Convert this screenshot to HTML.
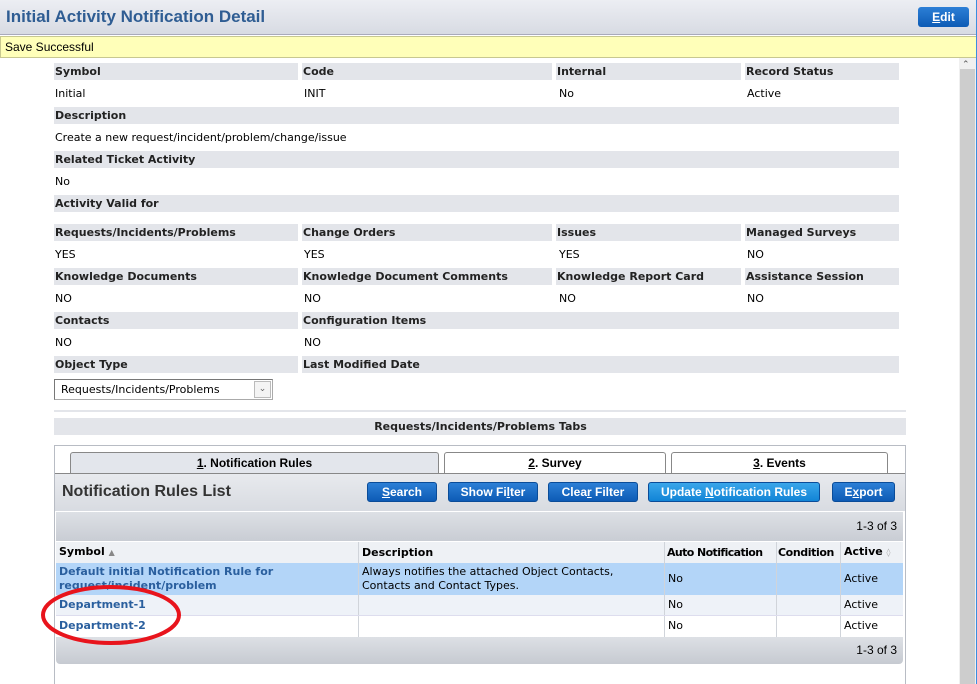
<!DOCTYPE html>
<html><head><style>
*{margin:0;padding:0;box-sizing:border-box}
body{width:977px;height:684px;overflow:hidden;background:#fff;font-family:"DejaVu Sans","Liberation Sans",sans-serif;font-size:11px;color:#000;position:relative}
.a{position:absolute}
.lb{position:absolute;background:#e3e5ea;font-weight:bold;height:17px;line-height:17px;padding-left:1px;font-size:11px;color:#222}
.v{position:absolute;line-height:14px;font-size:11px}
.btn{position:absolute;top:482px;height:20px;background:linear-gradient(#2c7fd6,#0d5bb5);border:1px solid #0a4c99;border-radius:3px;color:#fff;font-family:"Liberation Sans",sans-serif;font-weight:bold;font-size:12px;text-align:center;line-height:18px}
.tab{position:absolute;top:452px;height:22px;border:1px solid #888;border-bottom:none;border-radius:3px 3px 0 0;background:#fff;text-align:center;line-height:21px;font-family:"Liberation Sans",sans-serif;font-weight:bold;font-size:12px}
.c{position:absolute;border-right:1px solid #d0d4da;height:100%;top:0;white-space:nowrap}
.lnk{color:#2a5f9e;font-weight:bold}
</style></head><body>
<div class="a" style="left:0;top:0;width:977px;height:35px;background:linear-gradient(#eceef3,#d8dbe3);border-bottom:1px solid #aab"></div>
<div class="a" style="left:6px;top:7px;font-family:'Liberation Sans',sans-serif;font-weight:bold;font-size:17px;color:#2f5d93">Initial Activity Notification Detail</div>
<div class="a" style="left:918px;top:7px;width:51px;height:20px;background:linear-gradient(#2c7fd6,#0d5bb5);border-radius:3px;color:#fff;font-family:'Liberation Sans',sans-serif;font-weight:bold;font-size:12px;text-align:center;line-height:20px"><u>E</u>dit</div>
<div class="a" style="left:0;top:36px;width:977px;height:22px;background:#ffffb9;border:1px solid #c8c890;font-family:'Liberation Sans',sans-serif;font-size:12px;line-height:20px;padding-left:4px">Save Successful</div>
<div class="a" style="left:959px;top:58px;width:18px;height:626px;background:#f0f0f0"></div>
<div class="a" style="left:962px;top:60px;font-size:9px;color:#555">&#8963;</div>
<div class="a" style="left:960px;top:69px;width:15px;height:615px;background:#cdcdcd"></div>
<div class="a" style="left:976px;top:0;width:1px;height:684px;background:#3b8ee0"></div>

<div class="lb" style="left:54px;top:63px;width:244px">Symbol</div>
<div class="lb" style="left:302px;top:63px;width:250px">Code</div>
<div class="lb" style="left:556px;top:63px;width:185px">Internal</div>
<div class="lb" style="left:745px;top:63px;width:154px">Record Status</div>
<div class="v" style="left:55px;top:87px">Initial</div>
<div class="v" style="left:304px;top:87px">INIT</div>
<div class="v" style="left:559px;top:87px">No</div>
<div class="v" style="left:747px;top:87px">Active</div>
<div class="lb" style="left:54px;top:107px;width:845px">Description</div>
<div class="v" style="left:55px;top:131px">Create a new request/incident/problem/change/issue</div>
<div class="lb" style="left:54px;top:151px;width:845px">Related Ticket Activity</div>
<div class="v" style="left:55px;top:175px">No</div>
<div class="lb" style="left:54px;top:195px;width:845px">Activity Valid for</div>

<div class="lb" style="left:54px;top:224px;width:244px">Requests/Incidents/Problems</div>
<div class="lb" style="left:302px;top:224px;width:250px">Change Orders</div>
<div class="lb" style="left:556px;top:224px;width:185px">Issues</div>
<div class="lb" style="left:745px;top:224px;width:154px">Managed Surveys</div>
<div class="v" style="left:55px;top:248px">YES</div>
<div class="v" style="left:304px;top:248px">YES</div>
<div class="v" style="left:559px;top:248px">YES</div>
<div class="v" style="left:747px;top:248px">NO</div>
<div class="lb" style="left:54px;top:268px;width:244px">Knowledge Documents</div>
<div class="lb" style="left:302px;top:268px;width:250px">Knowledge Document Comments</div>
<div class="lb" style="left:556px;top:268px;width:185px">Knowledge Report Card</div>
<div class="lb" style="left:745px;top:268px;width:154px">Assistance Session</div>
<div class="v" style="left:55px;top:292px">NO</div>
<div class="v" style="left:304px;top:292px">NO</div>
<div class="v" style="left:559px;top:292px">NO</div>
<div class="v" style="left:747px;top:292px">NO</div>
<div class="lb" style="left:54px;top:312px;width:244px">Contacts</div>
<div class="lb" style="left:302px;top:312px;width:597px">Configuration Items</div>
<div class="v" style="left:55px;top:336px">NO</div>
<div class="v" style="left:304px;top:336px">NO</div>
<div class="lb" style="left:54px;top:356px;width:244px">Object Type</div>
<div class="lb" style="left:302px;top:356px;width:597px">Last Modified Date</div>
<div class="a" style="left:54px;top:379px;width:219px;height:21px;border:1px solid #aaa;border-top-color:#777;border-left-color:#777;padding-left:6px;line-height:19px;font-size:11px">Requests/Incidents/Problems</div>
<div class="a" style="left:254px;top:381px;width:17px;height:17px;border:1px solid #bbb;background:#f4f4f4;font-size:9px;text-align:center;line-height:15px;color:#666">&#8964;</div>

<div class="a" style="left:54px;top:410px;width:852px;height:2px;background:#e3e5ea"></div>
<div class="lb" style="left:54px;top:418px;width:852px;text-align:center">Requests/Incidents/Problems Tabs</div>

<div class="a" style="left:54px;top:445px;width:852px;height:239px;border:1px solid #b8bcc4;border-bottom:none"></div>
<div class="tab" style="left:70px;width:369px;background:#e3e6ec"><u>1</u>. Notification Rules</div>
<div class="tab" style="left:444px;width:222px"><u>2</u>. Survey</div>
<div class="tab" style="left:671px;width:217px"><u>3</u>. Events</div>
<div class="a" style="left:55px;top:473px;width:850px;height:38px;background:linear-gradient(#e8eaee,#d8dbe1);border-top:1px solid #888"></div>
<div class="a" style="left:62px;top:483px;font-family:'Liberation Sans',sans-serif;font-weight:bold;font-size:16px;color:#333">Notification Rules List</div>
<div class="btn" style="left:367px;width:70px"><u>S</u>earch</div>
<div class="btn" style="left:448px;width:90px">Show Fi<u>l</u>ter</div>
<div class="btn" style="left:548px;width:90px">Clea<u>r</u> Filter</div>
<div class="btn" style="left:648px;width:172px;background:linear-gradient(#3aa6ea,#1184d6)">Update <u>N</u>otification Rules</div>
<div class="btn" style="left:832px;width:63px">E<u>x</u>port</div>

<div class="a" style="left:56px;top:512px;width:847px;height:29px;background:linear-gradient(#dde0e5,#c9cdd4);text-align:right;padding-right:6px;line-height:28px;font-family:'Liberation Sans',sans-serif;font-size:12px">1-3 of 3</div>
<div class="a" style="left:56px;top:541px;width:847px;height:22px;background:#eef1f5;font-weight:bold;border-top:1px solid #fff">
 <div class="c" style="left:0;width:303px;padding:3px 3px">Symbol <span style="font-size:8px;color:#888">&#9650;</span></div>
 <div class="c" style="left:303px;width:306px;padding:4px 3px">Description</div>
 <div class="c" style="left:609px;width:112px;padding:4px 2px;letter-spacing:-0.6px;overflow:hidden">Auto Notification</div>
 <div class="c" style="left:721px;width:64px;padding:4px 1px;letter-spacing:-0.4px;overflow:hidden">Condition</div>
 <div class="a" style="left:786px;padding:3px 2px">Active <span style="font-size:8px;color:#aaa">&#9674;</span></div>
</div>
<div class="a" style="left:56px;top:563px;width:847px;height:32px;background:#b3d5f8">
 <div class="c" style="left:0;width:303px;padding:2px 3px;line-height:14px;white-space:normal"><span class="lnk">Default initial Notification Rule for request/incident/problem</span></div>
 <div class="c" style="left:303px;width:306px;padding:2px 3px;line-height:14px;white-space:normal">Always notifies the attached Object Contacts, Contacts and Contact Types.</div>
 <div class="c" style="left:609px;width:112px;padding:9px 3px">No</div>
 <div class="c" style="left:721px;width:64px"></div>
 <div class="a" style="left:788px;top:9px">Active</div>
</div>
<div class="a" style="left:56px;top:595px;width:847px;height:21px;background:#eef2f8;border-bottom:1px solid #dde">
 <div class="c" style="left:0;width:303px;padding:3px 3px"><span class="lnk">Department-1</span></div>
 <div class="c" style="left:303px;width:306px"></div>
 <div class="c" style="left:609px;width:112px;padding:3px 3px">No</div>
 <div class="c" style="left:721px;width:64px"></div>
 <div class="a" style="left:788px;top:3px">Active</div>
</div>
<div class="a" style="left:56px;top:616px;width:847px;height:21px;background:#fff">
 <div class="c" style="left:0;width:303px;padding:3px 3px"><span class="lnk">Department-2</span></div>
 <div class="c" style="left:303px;width:306px"></div>
 <div class="c" style="left:609px;width:112px;padding:3px 3px">No</div>
 <div class="c" style="left:721px;width:64px"></div>
 <div class="a" style="left:788px;top:3px">Active</div>
</div>
<div class="a" style="left:56px;top:637px;width:847px;height:27px;background:linear-gradient(#dde0e5,#c6cad1);border-radius:0 0 4px 4px;text-align:right;padding-right:6px;line-height:26px;font-family:'Liberation Sans',sans-serif;font-size:12px">1-3 of 3</div>

<svg class="a" style="left:0;top:0" width="977" height="684"><ellipse cx="111" cy="615" rx="68" ry="28" fill="none" stroke="#e8141c" stroke-width="4"/></svg>
</body></html>
